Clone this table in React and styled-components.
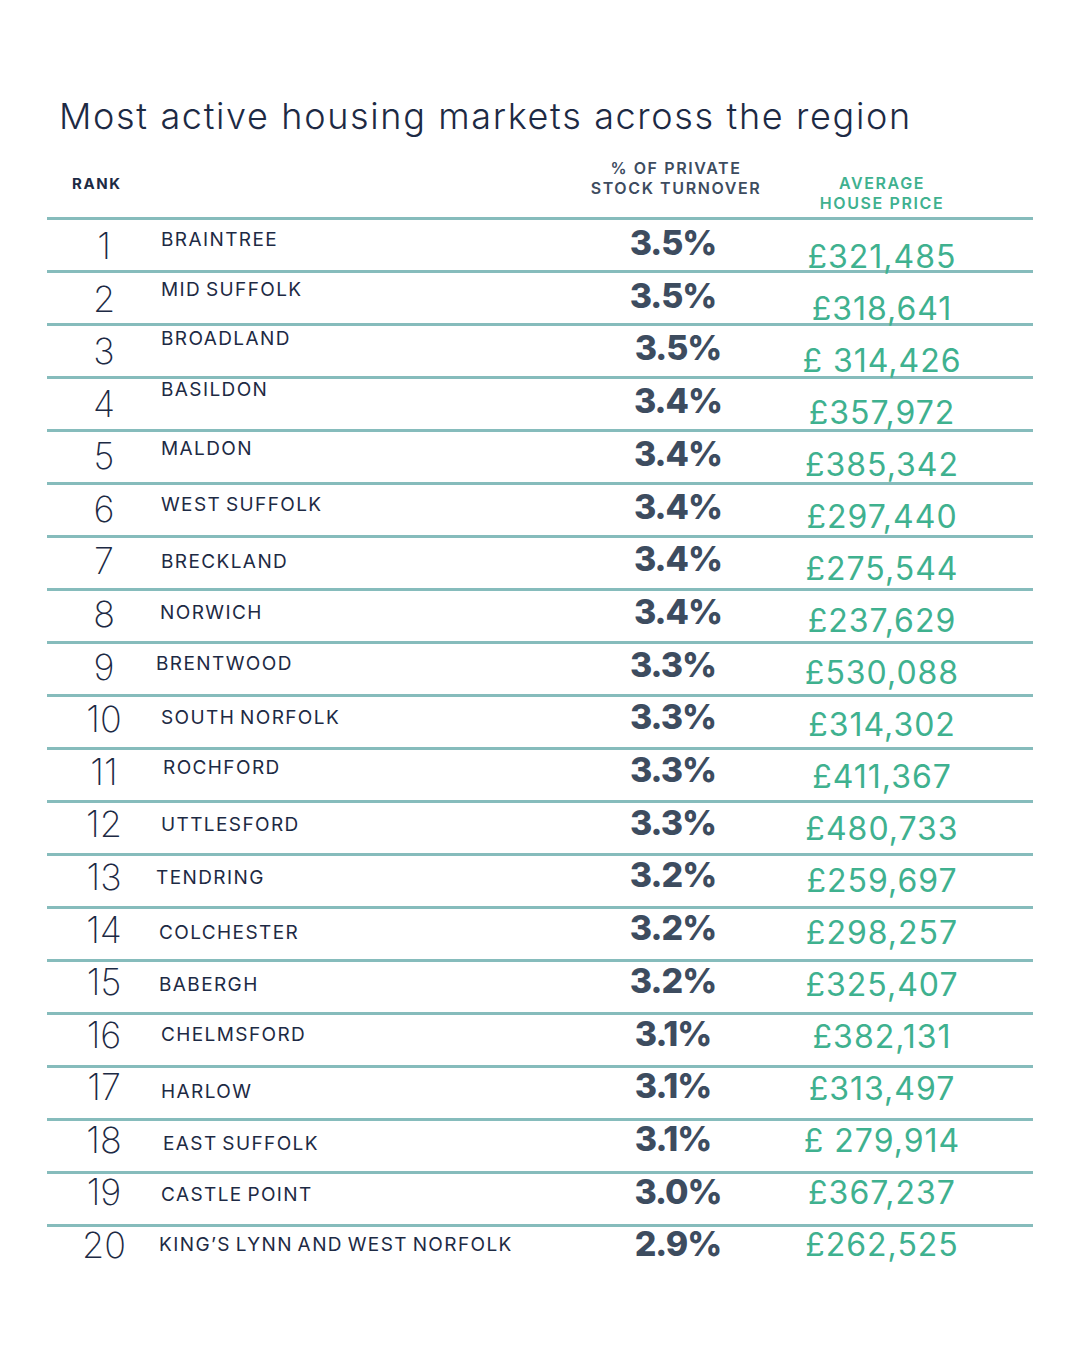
import React from 'react';
import styled, { createGlobalStyle } from 'styled-components';

const GlobalStyle = createGlobalStyle`
    body {
        margin: 0;
        background: #ffffff;
        font-family: Inter, "Liberation Sans", sans-serif;
    }
`

const Page = styled.div`
    width: 1080px;
    height: 1350px;
    box-sizing: border-box;
    padding: 98px 47px 0 47px;
    background: #ffffff;
`

const Title = styled.h1`
    margin: 0 0 0 12px;
    font-size: 36px;
    line-height: 36px;
    font-weight: 300;
    color: #1d2a44;
    letter-spacing: 1.65px;
`

const Table = styled.div`
    width: 986px;
`

const columns = '114px 429px 172px 240px 31px'

const HeaderRow = styled.div`
    display: grid;
    grid-template-columns: ${columns};
    height: 83px;
    border-bottom: 3px solid #86bcbc;
`

const RankHead = styled.div`
    padding: 42px 0 0 25px;
    font-size: 15px;
    line-height: 1;
    font-weight: 700;
    letter-spacing: 1.6px;
    color: #1d2a44;
`

const ColHead = styled.div`
    grid-column: ${p => p.$col};
    padding-top: ${p => p.$top}px;
    text-align: center;
    font-size: 16px;
    line-height: 20px;
    font-weight: 600;
    letter-spacing: 1.6px;
    color: ${p => p.$color};
`

const Row = styled.div`
    display: grid;
    grid-template-columns: ${columns};
    height: 50px;
    border-bottom: 3px solid #86bcbc;
    align-items: start;

    &:last-child {
        border-bottom-color: transparent;
    }
`

const Rank = styled.div`
    padding-top: ${p => 8 - p.$i * 0.42}px;
    text-align: center;
    font-size: 36px;
    line-height: 1;
    font-weight: 200;
    color: #1d2a44;
`

const Name = styled.div`
    padding-top: ${p => p.$y - 12.5}px;
    margin-left: ${p => p.$x - 161}px;
    font-size: 19px;
    line-height: 1;
    font-weight: 400;
    letter-spacing: 1.4px;
    word-spacing: -2px;
    color: #1d2a44;
    white-space: nowrap;
`

const Pct = styled.div`
    padding-top: ${p => 6 - p.$i * 0.3}px;
    transform: translateX(${p => p.$x - 676}px);
    text-align: center;
    font-size: 34px;
    line-height: 1;
    font-weight: 800;
    letter-spacing: -1px;
    color: #3d4c5f;
`

const Price = styled.div`
    padding-top: ${p => 21 - p.$i}px;
    text-align: center;
    font-size: 32px;
    line-height: 1;
    font-weight: 400;
    letter-spacing: 1px;
    color: #3fb18f;
    white-space: nowrap;
`

const rows = [
    ['BRAINTREE', '3.5%', '£321,485', 161, 22, 673],
    ['MID SUFFOLK', '3.5%', '£318,641', 161, 19, 673],
    ['BROADLAND', '3.5%', '£ 314,426', 161, 15, 678],
    ['BASILDON', '3.4%', '£357,972', 161, 13, 678],
    ['MALDON', '3.4%', '£385,342', 161, 19, 678],
    ['WEST SUFFOLK', '3.4%', '£297,440', 161, 22, 678],
    ['BRECKLAND', '3.4%', '£275,544', 161, 26, 678],
    ['NORWICH', '3.4%', '£237,629', 160, 24, 678],
    ['BRENTWOOD', '3.3%', '£530,088', 156, 22, 673],
    ['SOUTH NORFOLK', '3.3%', '£314,302', 161, 23, 673],
    ['ROCHFORD', '3.3%', '£411,367', 163, 20, 673],
    ['UTTLESFORD', '3.3%', '£480,733', 161, 24, 673],
    ['TENDRING', '3.2%', '£259,697', 156, 24, 673],
    ['COLCHESTER', '3.2%', '£298,257', 159, 26, 673],
    ['BABERGH', '3.2%', '£325,407', 159, 25, 673],
    ['CHELMSFORD', '3.1%', '£382,131', 161, 22, 673],
    ['HARLOW', '3.1%', '£313,497', 161, 26, 673],
    ['EAST SUFFOLK', '3.1%', '£ 279,914', 163, 25, 673],
    ['CASTLE POINT', '3.0%', '£367,237', 161, 23, 678],
    ['KING\u2019S LYNN AND WEST NORFOLK', '2.9%', '£262,525', 159, 20, 678],
]

export default function App() {
    return <>
        <GlobalStyle />
        <Page>
            <Title>Most active housing markets across the region</Title>
            <Table>
                <HeaderRow>
                    <RankHead>RANK</RankHead>
                    <ColHead $col={3} $top={24} $color="#3d4c5f">% OF PRIVATE<br />STOCK TURNOVER</ColHead>
                    <ColHead $col={4} $top={39} $color="#3fb18f">AVERAGE<br />HOUSE PRICE</ColHead>
                </HeaderRow>
                {rows.map(([name, pct, price, nx, ny, px], i) => (
                    <Row key={name}>
                        <Rank $i={i}>{i + 1}</Rank>
                        <Name $x={nx} $y={ny}>{name}</Name>
                        <Pct $i={i} $x={px}>{pct}</Pct>
                        <Price $i={i}>{price}</Price>
                    </Row>
                ))}
            </Table>
        </Page>
    </>;
}
